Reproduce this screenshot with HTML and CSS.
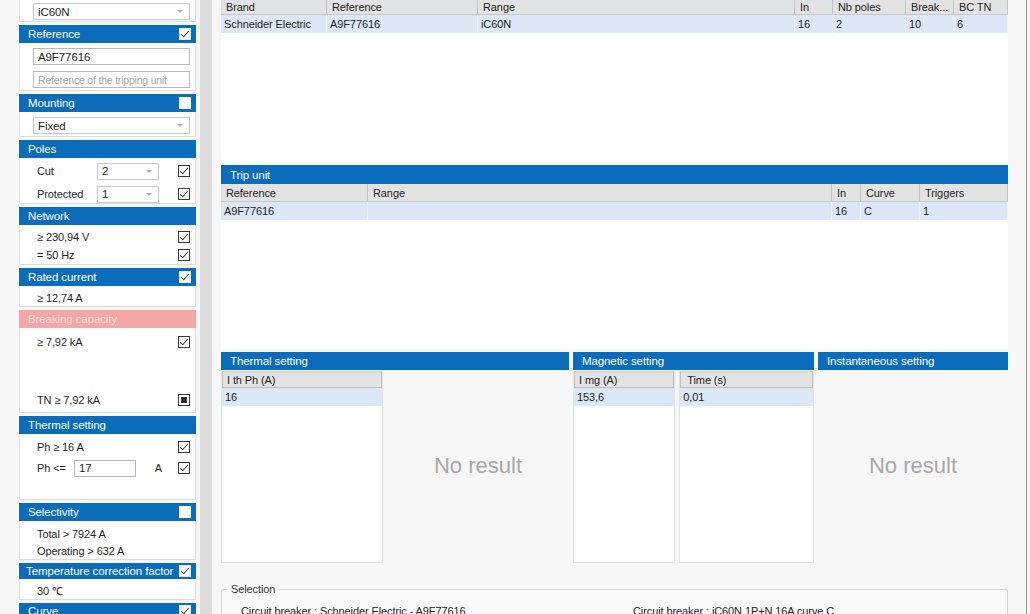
FILE: index.html
```html
<!DOCTYPE html>
<html lang="en">
<head>
    <meta charset="UTF-8">
    <title>Circuit breaker selection</title>
    <link rel="stylesheet" href="styles.css">
</head>
<body>
    <div class="window">
        <aside class="filters">
            <!-- Range (header scrolled out of view) -->
            <div class="group">
                <div class="body body-range">
                    <div class="combo wide">iC60N<span class="arrow"></span></div>
                </div>
            </div>

            <div class="group">
                <div class="head">Reference <span class="cb on"></span></div>
                <div class="body body-ref">
                    <div class="field wide">A9F77616</div>
                    <div class="field wide placeholder">Reference of the tripping unit</div>
                </div>
            </div>

            <div class="group">
                <div class="head">Mounting <span class="cb"></span></div>
                <div class="body body-mount">
                    <div class="combo wide">Fixed<span class="arrow"></span></div>
                </div>
            </div>

            <div class="group">
                <div class="head">Poles</div>
                <div class="body body-poles">
                    <div class="row">
                        <span class="label">Cut</span>
                        <div class="combo small">2<span class="arrow"></span></div>
                        <span class="grow"></span>
                        <span class="cb on"></span>
                    </div>
                    <div class="row">
                        <span class="label">Protected</span>
                        <div class="combo small">1<span class="arrow"></span></div>
                        <span class="grow"></span>
                        <span class="cb on"></span>
                    </div>
                </div>
            </div>

            <div class="group">
                <div class="head">Network</div>
                <div class="body body-net">
                    <div class="row"><span class="grow">&ge; 230,94 V</span><span class="cb on"></span></div>
                    <div class="row"><span class="grow">= 50 Hz</span><span class="cb on"></span></div>
                </div>
            </div>

            <div class="group">
                <div class="head">Rated current <span class="cb on"></span></div>
                <div class="body body-rated">
                    <div class="row"><span class="grow">&ge; 12,74 A</span></div>
                </div>
            </div>

            <div class="group">
                <div class="head head-warn">Breaking capacity</div>
                <div class="body body-break">
                    <div class="row"><span class="grow">&ge; 7,92 kA</span><span class="cb on"></span></div>
                    <div class="row"><span class="grow">TN &ge; 7,92 kA</span><span class="cb mixed"></span></div>
                </div>
            </div>

            <div class="group">
                <div class="head">Thermal setting</div>
                <div class="body body-thermal">
                    <div class="row"><span class="grow">Ph &ge; 16 A</span><span class="cb on"></span></div>
                    <div class="row">
                        <span class="label short">Ph &lt;=</span>
                        <div class="field small">17</div>
                        <span class="grow unit">A</span>
                        <span class="cb on"></span>
                    </div>
                </div>
            </div>

            <div class="group">
                <div class="head">Selectivity <span class="cb"></span></div>
                <div class="body body-sel">
                    <div class="row tight">Total &gt; 7924 A</div>
                    <div class="row tight">Operating &gt; 632 A</div>
                </div>
            </div>

            <div class="group">
                <div class="head head-temp">Temperature correction factor <span class="cb on"></span></div>
                <div class="body body-temp">
                    <div class="row">30 &#8451;</div>
                </div>
            </div>

            <div class="group">
                <div class="head head-last">Curve <span class="cb on"></span></div>
            </div>
        </aside>

        <div class="splitter"></div>

        <main class="results">
            <div class="grid grid-top">
                <div class="grid-row cols-top header">
                    <span>Brand</span><span>Reference</span><span>Range</span><span>In</span><span>Nb poles</span><span>Break...</span><span>BC TN</span>
                </div>
                <div class="grid-row cols-top selected">
                    <span>Schneider Electric</span><span>A9F77616</span><span>iC60N</span><span>16</span><span>2</span><span>10</span><span>6</span>
                </div>
            </div>

            <div class="head main-head trip-head">Trip unit</div>
            <div class="grid grid-trip">
                <div class="grid-row cols-trip header">
                    <span>Reference</span><span>Range</span><span>In</span><span>Curve</span><span>Triggers</span>
                </div>
                <div class="grid-row cols-trip selected">
                    <span>A9F77616</span><span></span><span>16</span><span>C</span><span>1</span>
                </div>
            </div>

            <div class="settings">
                <div class="panel panel-thermal">
                    <div class="head main-head">Thermal setting</div>
                    <div class="panel-body">
                        <div class="column col-ith">
                            <div class="col-head">I th Ph (A)</div>
                            <div class="col-cell">16</div>
                        </div>
                        <div class="empty">No result</div>
                    </div>
                </div>
                <div class="panel panel-magnetic">
                    <div class="head main-head">Magnetic setting</div>
                    <div class="panel-body">
                        <div class="column col-img">
                            <div class="col-head">I mg (A)</div>
                            <div class="col-cell">153,6</div>
                        </div>
                        <div class="column col-time">
                            <div class="col-head">Time (s)</div>
                            <div class="col-cell">0,01</div>
                        </div>
                    </div>
                </div>
                <div class="panel panel-inst">
                    <div class="head main-head">Instantaneous setting</div>
                    <div class="panel-body">
                        <div class="empty">No result</div>
                    </div>
                </div>
            </div>

            <fieldset class="selection">
                <legend>Selection</legend>
                <div class="summary">
                    <span class="summary-left">Circuit breaker : Schneider Electric - A9F77616</span>
                    <span>Circuit breaker : iC60N 1P+N 16A curve C</span>
                </div>
            </fieldset>
        </main>

        <div class="edge"></div>
    </div>
</body>
</html>
```

FILE: styles.css
```css
body {
    margin: 0;
    width: 1030px;
    height: 614px;
    overflow: hidden;
    background: #f7f7f7;
    font-family: "Liberation Sans", Arial, sans-serif;
    font-size: 11px;
    letter-spacing: -0.1px;
    color: #1f1f1f;
}

.window {
    display: flex;
    height: 614px;
    overflow: hidden;
}

/* left filter column */
.filters {
    width: 200px;
    flex: none;
    box-sizing: border-box;
    padding: 0 4px 0 19px;
    display: flex;
    flex-direction: column;
    gap: 3px;
    overflow: hidden;
}

.filters > .group {
    flex: none;
}

.head {
    height: 18px;
    flex: none;
    box-sizing: border-box;
    background: #0b6cbc;
    color: #fff;
    font-size: 11.5px;
    display: flex;
    align-items: center;
    justify-content: space-between;
    padding: 0 5px 0 9px;
}

.head-warn {
    background: #f5a6a6;
    color: #fcdcdc;
}

.head-temp {
    height: 16px;
    padding-left: 7px;
}

.head-last {
    height: 11px;
    align-items: flex-start;
    padding-top: 2px;
}

.body {
    background: #fff;
    border: 1px solid #dddddd;
    border-top: 0;
    box-sizing: border-box;
}

.body-range { height: 22px; padding: 3px 0 0 13px; }
.body-ref { height: 48px; padding: 5px 0 0 13px; display: flex; flex-direction: column; gap: 6px; }
.body-mount { height: 25px; padding: 5px 0 0 13px; }
.body-poles { height: 46px; padding-top: 4px; display: flex; flex-direction: column; gap: 5px; }
.body-net { height: 40px; padding-top: 3px; }
.body-rated { height: 21px; padding-top: 3px; }
.body-break { height: 85px; padding: 5px 0 3px; display: flex; flex-direction: column; justify-content: space-between; }
.body-thermal { height: 66px; padding-top: 4px; display: flex; flex-direction: column; gap: 3px; }
.body-sel { height: 39px; padding-top: 4px; }
.body-temp { height: 21px; padding-top: 2px; }

.row {
    display: flex;
    align-items: center;
    height: 18px;
    padding: 0 5px 0 17px;
}

.row.tight {
    height: 17px;
}

.label {
    width: 60px;
}

.label.short {
    width: 37px;
}

.grow {
    flex: 1;
}

.unit {
    text-align: right;
    padding-right: 16px;
}

.combo, .field {
    height: 17px;
    box-sizing: border-box;
    background: #fff;
    border: 1px solid #c9c9c9;
    padding: 0 0 0 4px;
    display: flex;
    align-items: center;
    justify-content: space-between;
    font-size: 11.5px;
}

.field {
    border-color: #b9b9b9;
}

.wide {
    width: 157px;
}

.small {
    width: 62px;
}

.placeholder {
    color: #a6a6a6;
    font-size: 10.5px;
    letter-spacing: -0.2px;
}

.arrow {
    width: 0;
    height: 0;
    margin-right: 6px;
    border-left: 3px solid transparent;
    border-right: 3px solid transparent;
    border-top: 3px solid #b0b0b0;
}

.cb {
    width: 12px;
    height: 12px;
    flex: none;
    box-sizing: border-box;
    border: 1px solid #3a3a3a;
    background: #fff;
    display: flex;
    align-items: center;
    justify-content: center;
}

.cb.on::after {
    content: "";
    width: 7px;
    height: 3px;
    margin-top: -2px;
    border-left: 1.5px solid #333;
    border-bottom: 1.5px solid #333;
    transform: rotate(-48deg);
}

.cb.mixed::after {
    content: "";
    width: 6px;
    height: 6px;
    background: #333;
}

.head .cb {
    border-color: #fff;
}

.head .cb.on {
    border-color: #e8e8e8;
}

/* splitter between filters and results */
.splitter {
    width: 12px;
    flex: none;
    margin-right: 9px;
    background: #dcdcdc;
}

/* results */
.results {
    width: 787px;
    flex: none;
    display: flex;
    flex-direction: column;
}

.results > * {
    flex: none;
}

.grid {
    background: #fff;
}

.grid-top {
    height: 162px;
    margin-bottom: 3px;
}

.main-head {
    padding-left: 9px;
    height: 18px;
}

.trip-head {
    height: 19px;
}

.grid-trip {
    height: 165px;
    margin-bottom: 3px;
}

.grid-row {
    display: grid;
}

.grid-row span {
    display: flex;
    align-items: center;
    padding-left: 3px;
    white-space: nowrap;
    overflow: hidden;
}

.grid-row.header {
    height: 16px;
    background: #e3e3e3;
    border-bottom: 1px solid #c7c7c7;
    box-sizing: border-box;
}

.grid-row.header span {
    padding-left: 5px;
    border-right: 1px solid #c4c4c4;
}

.grid-row.selected {
    height: 18px;
    background: #dce8f7;
}

.grid-row.selected span {
    border-right: 1px solid #eef3fa;
}

.grid-top .grid-row.header {
    height: 15px;
}

.grid-trip .grid-row.header {
    height: 18px;
}

.cols-top {
    grid-template-columns: 106px 151px 317px 38px 73px 48px 54px;
}

.cols-trip {
    grid-template-columns: 147px 464px 29px 59px 88px;
}

.settings {
    display: flex;
    gap: 4px;
    height: 211px;
}

.panel {
    display: flex;
    flex-direction: column;
}

.panel-thermal { width: 348px; }
.panel-magnetic { width: 241px; }
.panel-inst { width: 190px; }

.panel-body {
    flex: 1;
    display: flex;
    gap: 4px;
    padding-top: 1px;
}

.column {
    background: #fff;
    border: 1px solid #e3e3e3;
    border-top: 0;
    display: flex;
    flex-direction: column;
}

.col-ith { width: 160px; }
.col-img { width: 102px; }
.col-time { width: 135px; }

.col-head {
    height: 17px;
    box-sizing: border-box;
    background: #e3e3e3;
    border: 1px solid #bdbdbd;
    border-top-color: #d0d0d0;
    padding-left: 4px;
    display: flex;
    align-items: center;
}

.col-time .col-head {
    padding-left: 6px;
}

.col-cell {
    height: 18px;
    background: #dce8f7;
    padding-left: 3px;
    display: flex;
    align-items: center;
}

.empty {
    flex: 1;
    display: flex;
    align-items: center;
    justify-content: center;
    padding-bottom: 2px;
    font-size: 22px;
    letter-spacing: 0;
    color: #a9a9a9;
}

.selection {
    margin: 20px 0 0;
    padding: 0 8px 0 6px;
    border: 1px solid #d6d6d6;
    border-radius: 2px;
    background: #fafafa;
    height: 40px;
}

.selection legend {
    padding: 0 3px;
    color: #333;
}

.summary {
    display: flex;
    padding: 10px 0 0 13px;
}

.summary-left {
    width: 392px;
}

.edge {
    flex: 1;
    border-right: 1px solid #8f8f8f;
    margin-right: 3px;
}
```
